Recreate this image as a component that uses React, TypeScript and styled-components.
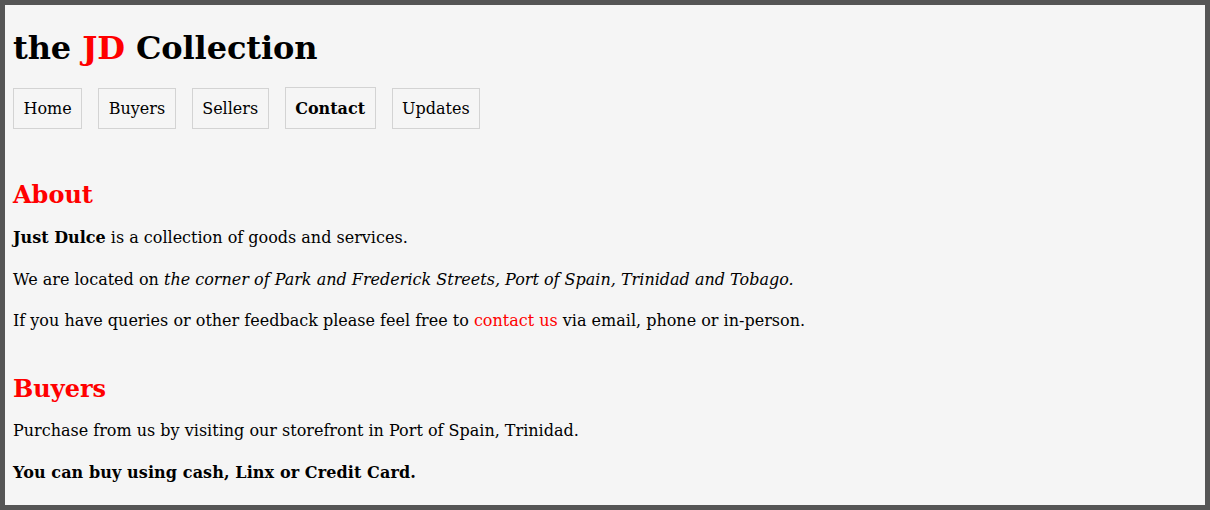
import React from 'react';
import styled, { createGlobalStyle } from 'styled-components';

const GlobalStyle = createGlobalStyle`
  html, body {
    margin: 0;
    padding: 0;
    background: #555555;
  }
  body {
    font-family: "DejaVu Serif", serif;
    color: #000;
  }
`;

const Frame = styled.div`
  box-sizing: border-box;
  width: 1210px;
  height: 510px;
  border: 5px solid #555555;
  background: #f5f5f5;
  padding: 0 8px;
  overflow: hidden;
`;

const Title = styled.h1`
  font-size: 32px;
  font-weight: bold;
  margin: 24px 0 20px;
  line-height: 1.2;
  letter-spacing: -0.1px;
`;

const Red = styled.span`
  color: #ff0000;
`;

const Nav = styled.nav`
  display: flex;
  align-items: flex-end;
  gap: 16px;
  padding-bottom: 11px;
`;

const NavItem = styled.a<{ $active?: boolean }>`
  display: block;
  padding: ${(p) => (p.$active ? '11px' : '10px')} 9.5px 10px;
  border: 1px solid #d3d3d3;
  font-size: 16px;
  line-height: 19px;
  color: #000;
  text-decoration: none;
  font-weight: ${(p) => (p.$active ? 'bold' : 'normal')};
`;

const Section = styled.section`
  margin-top: 41px;
`;

const Heading = styled.h2`
  color: #ff0000;
  font-size: 24px;
  font-weight: bold;
  margin: 0 0 15px;
  line-height: 1.2;
`;

const Para = styled.p<{ $strong?: boolean }>`
  font-size: 16px;
  line-height: 25.5px;
  margin: 0 0 16px;
  font-weight: ${(p) => (p.$strong ? 'bold' : 'normal')};
  letter-spacing: ${(p) => (p.$strong ? '0.1px' : 'normal')};
`;

const Link = styled.a`
  color: #ff0000;
  text-decoration: none;
`;

const navLinks = ['Home', 'Buyers', 'Sellers', 'Contact', 'Updates'];

export default function App() {
  return (
    <>
      <GlobalStyle />
      <Frame>
        <Title>
          the <Red>JD</Red> Collection
        </Title>
        <Nav>
          {navLinks.map((n) => (
            <NavItem key={n} href="#" $active={n === 'Contact'}>
              {n}
            </NavItem>
          ))}
        </Nav>
        <Section>
          <Heading>About</Heading>
          <Para>
            <b>Just Dulce</b> is a collection of goods and services.
          </Para>
          <Para>
            We are located on{' '}
            <i>the corner of Park and Frederick Streets, Port of Spain, Trinidad and Tobago.</i>
          </Para>
          <Para>
            If you have queries or other feedback please feel free to <Link href="#">contact us</Link> via
            email, phone or in-person.
          </Para>
        </Section>
        <Section>
          <Heading>Buyers</Heading>
          <Para>Purchase from us by visiting our storefront in Port of Spain, Trinidad.</Para>
          <Para $strong>You can buy using cash, Linx or Credit Card.</Para>
        </Section>
      </Frame>
    </>
  );
}
